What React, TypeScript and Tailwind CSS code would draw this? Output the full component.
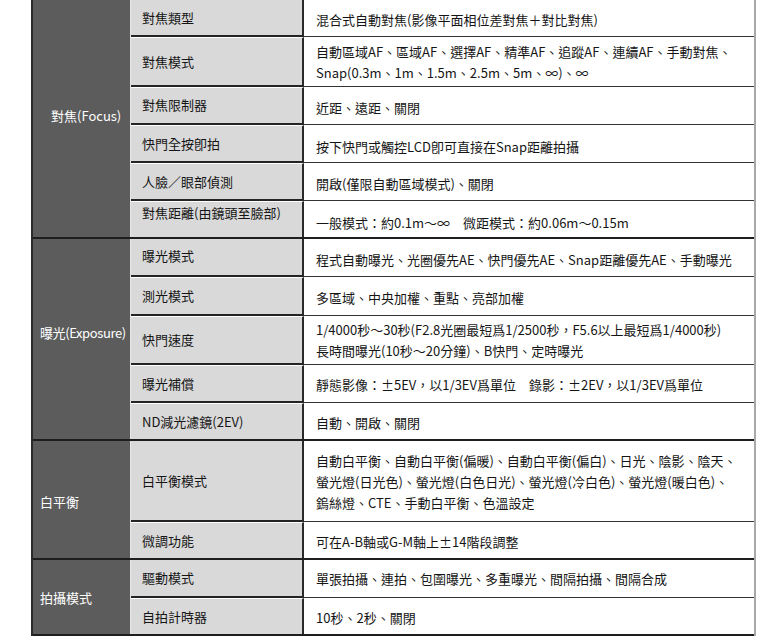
import React from "react";

type Row = {
  label: string;
  value: React.ReactNode;
  h: number;
  labelClass?: string;
  valueClass?: string;
};

type Group = {
  title: string;
  titleClass: string;
  rows: Row[];
};

const groups: Group[] = [
  {
    title: "對焦(Focus)",
    titleClass: "pl-[18px] pb-[5px]",
    rows: [
      { label: "對焦類型", value: "混合式自動對焦(影像平面相位差對焦＋對比對焦)", h: 37, valueClass: "pt-[2px]" },
      {
        label: "對焦模式",
        value: (
          <>
            自動區域AF、區域AF、選擇AF、精準AF、追蹤AF、連續AF、手動對焦、
            <br />
            Snap(0.3m、1m、1.5m、2.5m、5m、∞)、∞
          </>
        ),
        h: 50,
      },
      { label: "對焦限制器", value: "近距、遠距、關閉", h: 38, valueClass: "pt-[4px]", labelClass: "pb-[2px]" },
      { label: "快門全按卽拍", value: "按下快門或觸控LCD卽可直接在Snap距離拍攝", h: 38, valueClass: "pt-[6px]" },
      { label: "人臉／眼部偵測", value: "開啟(僅限自動區域模式)、關閉", h: 38, valueClass: "pt-[4px]" },
      {
        label: "對焦距離(由鏡頭至臉部)",
        value: "一般模式：約0.1m～∞　微距模式：約0.06m～0.15m",
        h: 38,
        labelClass: "pb-[14px]",
        valueClass: "pt-[6px]",
      },
    ],
  },
  {
    title: "曝光(Exposure)",
    titleClass: "pl-[7px] pb-[12px] tracking-[-0.4px]",
    rows: [
      { label: "曝光模式", value: "程式自動曝光、光圈優先AE、快門優先AE、Snap距離優先AE、手動曝光", h: 38, valueClass: "pt-[3px]", labelClass: "pb-[2px]" },
      { label: "測光模式", value: "多區域、中央加權、重點、亮部加權", h: 39, valueClass: "pt-[3px]" },
      {
        label: "快門速度",
        value: (
          <>
            1/4000秒～30秒(F2.8光圈最短爲1/2500秒，F5.6以上最短爲1/4000秒)
            <br />
            長時間曝光(10秒～20分鐘)、B快門、定時曝光
          </>
        ),
        h: 49,
      },
      { label: "曝光補償", value: "靜態影像：±5EV，以1/3EV爲單位　錄影：±2EV，以1/3EV爲單位", h: 38, valueClass: "pt-[2px]" },
      { label: "ND減光濾鏡(2EV)", value: "自動、開啟、關閉", h: 38, valueClass: "pt-[2px]" },
    ],
  },
  {
    title: "白平衡",
    titleClass: "pl-[7px] pt-[4px]",
    rows: [
      {
        label: "白平衡模式",
        value: (
          <>
            自動白平衡、自動白平衡(偏暖)、自動白平衡(偏白)、日光、陰影、陰天、
            <br />
            螢光燈(日光色)、螢光燈(白色日光)、螢光燈(冷白色)、螢光燈(暖白色)、
            <br />
            鎢絲燈、CTE、手動白平衡、色溫設定
          </>
        ),
        h: 81,
      },
      { label: "微調功能", value: "可在A-B軸或G-M軸上±14階段調整", h: 38, valueClass: "pt-[2px]" },
    ],
  },
  {
    title: "拍攝模式",
    titleClass: "pl-[7px] pt-[2px]",
    rows: [
      { label: "驅動模式", value: "單張拍攝、連拍、包圍曝光、多重曝光、間隔拍攝、間隔合成", h: 38 },
      { label: "自拍計時器", value: "10秒、2秒、關閉", h: 38, valueClass: "pt-[2px]" },
    ],
  },
];

export default function App() {
  return (
    <div
      className="w-[780px] h-[636px] overflow-hidden bg-white text-[13px] text-[#151515]"
      style={{ fontFamily: '"Noto Sans CJK TC", "Noto Sans", sans-serif' }}
    >
      <div className="ml-[31px] w-[725px] border-l-2 border-[#2a2a2a] border-r-2 border-r-[#a8a8a8]">
        {groups.map((g, gi) => (
          <div key={gi} className="flex border-b-2 border-[#1e1e1e]">
            <div
              className={`w-[98px] shrink-0 flex items-center whitespace-nowrap bg-[#5c5c5c] text-white border-r border-[#e6e6e6] ${g.titleClass}`}
            >
              {g.title}
            </div>
            <div className="flex-1 flex flex-col">
              {g.rows.map((r, ri) => {
                const last = ri === g.rows.length - 1;
                return (
                  <div key={ri} className="flex" style={{ height: last ? r.h - 2 : r.h }}>
                    <div
                      className={`w-[173px] shrink-0 flex items-center pl-[11px] bg-[#d9d9d9] border-r-2 border-[#2a2a2a] ${
                        ri > 0 ? "border-t border-t-white" : ""
                      } ${last ? "" : "border-b-2 border-b-[#242424]"} ${r.labelClass ?? ""}`}
                    >
                      {r.label}
                    </div>
                    <div
                      className={`flex-1 flex items-center pl-[12px] leading-[21px] whitespace-nowrap ${
                        last ? "" : "border-b border-[#333]"
                      } ${r.valueClass ?? ""}`}
                    >
                      <div>{r.value}</div>
                    </div>
                  </div>
                );
              })}
            </div>
          </div>
        ))}
      </div>
    </div>
  );
}
